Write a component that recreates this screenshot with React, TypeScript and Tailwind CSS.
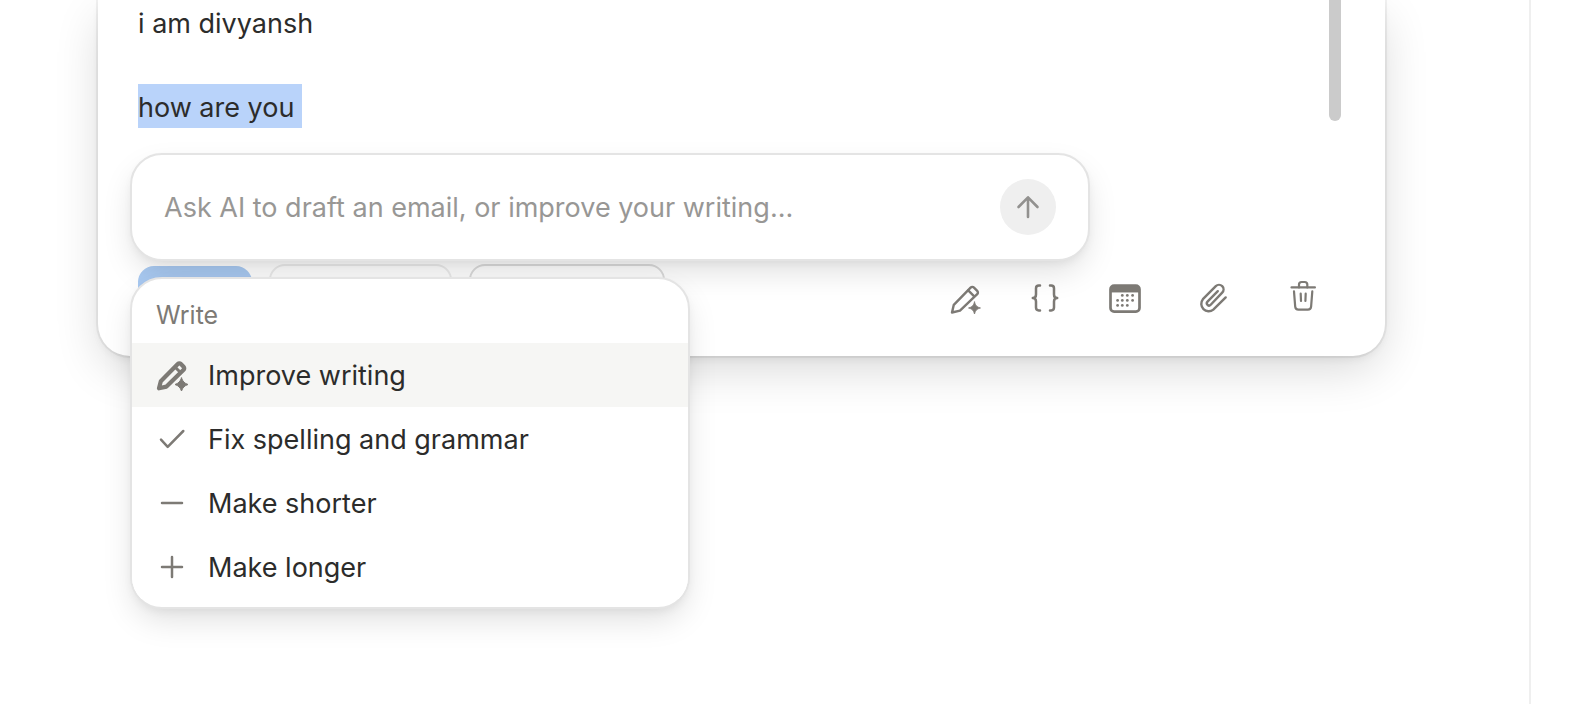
import { ReactNode } from 'react';

interface IconProps {
  children: ReactNode;
  strokeWidth?: number;
}

const Icon = ({ children, strokeWidth = 2 }: IconProps) => (
  <svg
    viewBox="0 0 32 32"
    fill="none"
    stroke="currentColor"
    strokeWidth={strokeWidth}
    strokeLinecap="round"
    strokeLinejoin="round"
    className="block size-8 shrink-0 overflow-visible"
    aria-hidden="true"
  >
    {children}
  </svg>
);

const PencilSparkle = () => (
  <Icon strokeWidth={2.4}>
    <path d="M3 30.500 4.800 22.800 21.600 5.600a2.400 2.400 0 0 1 3.400 0l3.200 3.200a2.400 2.400 0 0 1 0 3.400L11 28.600Z" />
    <path d="m19.200 8.400 6 6" />
    <path
      d="M25.500 20c.9 3.600 2.300 5 6 6-3.700.9-5.100 2.300-6 6-.9-3.700-2.300-5.100-6-6 3.700-1 5.100-2.400 6-6Z"
      fill="currentColor"
      strokeWidth="0.800"
    />
  </Icon>
);

const PencilSparkleBold = () => (
  <Icon strokeWidth={4.2}>
    <path d="M3 29.300 4.800 22.300 21.800 5a2.200 2.200 0 0 1 3.100 0l2.700 2.700a2.200 2.200 0 0 1 0 3.100L10.500 27.600Z" />
    <path d="m19.500 8.500 5 5" strokeWidth="3" />
    <path
      d="M25.500 19c1.300 3.600 2.900 5.200 6.500 6.500-3.600 1.300-5.200 2.900-6.500 6.500-1.300-3.600-2.900-5.200-6.500-6.500 3.600-1.300 5.200-2.900 6.500-6.500Z"
      fill="currentColor"
      strokeWidth="1"
    />
  </Icon>
);

const Braces = () => (
  <Icon strokeWidth={2.5}>
    <path d="M11 3.400H9.800Q7 3.400 7 6.200V12.500Q7 16 3.800 16 7 16 7 19.500V25.600Q7 28.400 9.800 28.400H11" />
    <path d="M21 3.400h1.200Q25 3.400 25 6.200V12.500Q25 16 28.200 16 25 16 25 19.500V25.600Q25 28.400 22.200 28.400H21" />
  </Icon>
);

const calendarDots = [
  [13.3, 13.4], [18.3, 13.4], [23.6, 13.4],
  [8.6, 18.4], [13.3, 18.4], [18.3, 18.4], [23.6, 18.4],
  [8.6, 23.4], [13.3, 23.4], [18.3, 23.4],
];

const Calendar = () => (
  <Icon strokeWidth={2.7}>
    <rect x="1.500" y="3.600" width="29" height="26" rx="3.600" />
    <path d="M1.500 10V7a3.300 3.300 0 0 1 3.300-3.300h22.400A3.300 3.300 0 0 1 30.500 7v3Z" fill="currentColor" strokeWidth="0.500" />
    {calendarDots.map(([x, y]) => (
      <circle key={`${x}-${y}`} cx={x} cy={y} r="1.400" fill="currentColor" stroke="none" />
    ))}
  </Icon>
);

const Paperclip = () => (
  <Icon strokeWidth={2.4}>
    <path d="M28.700 15.400 16.300 27.600A7.400 7.400 0 0 1 5.900 17.200L18.800 4.200A4.500 4.500 0 0 1 25.200 10.600L13.700 22.800A2.200 2.200 0 0 1 10.500 19.700L20.800 9.200" />
  </Icon>
);

const Trash = () => (
  <Icon strokeWidth={2.2}>
    <path d="M6.500 5.400h23.400" />
    <path d="M14 5.400V2.600Q14 0 16.600 0h3.100q2.600 0 2.600 2.600V5.400" />
    <path d="m9 9.300 1.200 15.300q.3 3 3.200 3h9.500q2.900 0 3.200-3L27.300 9.300" />
    <path d="m15.700 11.600.3 7.400M20.700 11.600l-.3 7.400" />
  </Icon>
);

const toolClass = 'rounded text-[#7d7a75] hover:text-[#2c2c2b]';

const menuItems = [
  { label: 'Improve writing', icon: <PencilSparkleBold />, active: true },
  { label: 'Fix spelling and grammar', icon: <Icon strokeWidth={2.5}><path d="m5 16.700 6.700 7.100L27.300 8" /></Icon> },
  { label: 'Make shorter', icon: <Icon strokeWidth={2.5}><path d="M6 16h20" /></Icon> },
  { label: 'Make longer', icon: <Icon strokeWidth={2.5}><path d="M6 16h20M16 6v20" /></Icon> },
];

const Toolbar = () => (
  <div className="flex items-center pl-10 pr-[68px] pb-6">
    <div className="flex items-center gap-[17px]">
      <button type="button" aria-label="Send" className="h-16 w-[114px] rounded-2xl bg-[#a9caf2]" />
      <button type="button" aria-label="Schedule" className="h-[68px] w-[183px] rounded-2xl border-2 border-[#ececec]" />
      <button type="button" aria-label="Save draft" className="h-[68px] w-[196px] rounded-2xl border-2 border-[#dcdcdc]" />
    </div>
    <div className="ml-auto flex items-center gap-14">
      <div className="flex items-center gap-12">
        <button type="button" aria-label="Write with AI" className={toolClass}><PencilSparkle /></button>
        <button type="button" aria-label="Insert variable" className={toolClass}><Braces /></button>
        <button type="button" aria-label="Share availability" className={toolClass}><Calendar /></button>
      </div>
      <button type="button" aria-label="Attach file" className={toolClass}><Paperclip /></button>
      <button type="button" aria-label="Discard draft" className={toolClass}><Trash /></button>
    </div>
  </div>
);

const AiPrompt = () => (
  <form
    className="flex w-[960px] items-center rounded-[32px] border-2 border-[#e4e4e4] bg-white px-8 py-6 shadow-[0_14px_32px_-4px_rgba(0,0,0,0.13),0_4px_10px_-2px_rgba(0,0,0,0.06)]"
    onSubmit={(e) => e.preventDefault()}
  >
    <input
      type="text"
      aria-label="Ask AI"
      placeholder="Ask AI to draft an email, or improve your writing..."
      className="min-w-0 flex-1 bg-transparent pt-0.5 text-[27px] leading-9 outline-none placeholder:text-[#989795]"
    />
    <button type="submit" aria-label="Submit" className="flex size-14 items-center justify-center rounded-full bg-[#efefef] text-[#92918f]">
      <Icon strokeWidth={2.6}>
        <path d="M16 26V6.600M6.500 16 16 6.300 25.500 16" />
      </Icon>
    </button>
  </form>
);

const AiMenu = () => (
  <div
    role="menu"
    className="w-[560px] overflow-hidden rounded-[32px] border-2 border-[#e4e4e4] bg-white pb-2 shadow-[0_14px_32px_-4px_rgba(0,0,0,0.13),0_4px_10px_-2px_rgba(0,0,0,0.06)]"
  >
    <div className="flex h-16 items-center px-6 pt-2.5 text-[25px] text-[#7d7a75]">Write</div>
    {menuItems.map((item) => (
      <button
        key={item.label}
        type="button"
        role="menuitem"
        className={`flex h-16 w-full items-center gap-5 px-6 text-left text-[27px] text-[#2c2c2b] ${item.active ? 'bg-[#f6f6f4]' : 'bg-white'}`}
      >
        <span className="text-[#7d7a75]">{item.icon}</span>
        <span className="pt-0.5">{item.label}</span>
      </button>
    ))}
  </div>
);

export default function App() {
  return (
    <div className="flex min-h-screen bg-white font-[Inter,sans-serif] text-[#2c2c2b]">
      <main className="min-w-0 flex-1 pl-[98px] pr-36">
        <section className="relative rounded-b-[32px] bg-white shadow-[0_0_0_2px_rgba(0,0,0,0.05),0_16px_48px_-4px_rgba(0,0,0,0.16),0_4px_10px_-2px_rgba(0,0,0,0.07)]">
          <div className="flex h-66 items-start justify-between pl-10 pr-11">
            <div className="text-[27px] leading-[42px]">
              <p className="h-[84px] pt-[3px]">i am divyansh</p>
              <p className="h-11 w-fit bg-[#b9d3fa] pt-[3px] whitespace-pre">how are you </p>
            </div>
            <div className="h-[121px] w-3 rounded-b-full bg-[#cbcbcb]" />
          </div>
          <Toolbar />
          <div className="absolute left-8 top-[153px] flex flex-col gap-4">
            <AiPrompt />
            <AiMenu />
          </div>
        </section>
      </main>
      <aside className="w-[41px] border-l-2 border-[#efefef]" />
    </div>
  );
}
